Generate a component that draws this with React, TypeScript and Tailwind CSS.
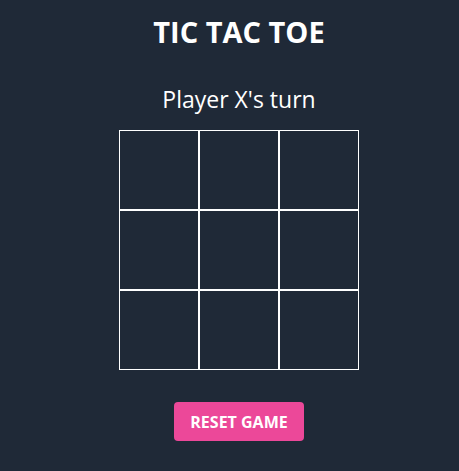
import React, { useState } from "react";

type Cell = "X" | "O" | null;

export default function App() {
  const [board, setBoard] = useState<Cell[]>(Array(9).fill(null));
  const [xTurn, setXTurn] = useState(true);

  const play = (i: number) => {
    if (board[i]) return;
    const next = board.slice();
    next[i] = xTurn ? "X" : "O";
    setBoard(next);
    setXTurn(!xTurn);
  };

  const reset = () => {
    setBoard(Array(9).fill(null));
    setXTurn(true);
  };

  return (
    <div
      className="min-h-screen w-full bg-[#1f2937] text-white pl-[19px]"
      style={{ fontFamily: '"Open Sans", "Noto Sans", sans-serif' }}
    >
      <div className="flex flex-col items-center pt-4">
        <h1 className="text-[29px] leading-8 font-bold">TIC TAC TOE</h1>
        <p className="mt-[37px] text-[23px] leading-7">
          Player {xTurn ? "X" : "O"}'s turn
        </p>
        <div className="mt-[17px] grid grid-cols-3 w-[240px]">
          {board.map((c, i) => (
            <button
              key={i}
              onClick={() => play(i)}
              className="h-20 w-20 border border-white text-4xl font-bold"
            >
              {c}
            </button>
          ))}
        </div>
        <button
          onClick={reset}
          className="mt-8 h-[39px] w-[130px] rounded bg-[#ec4899] text-[16px] font-bold uppercase text-white"
        >
          Reset Game
        </button>
      </div>
    </div>
  );
}
